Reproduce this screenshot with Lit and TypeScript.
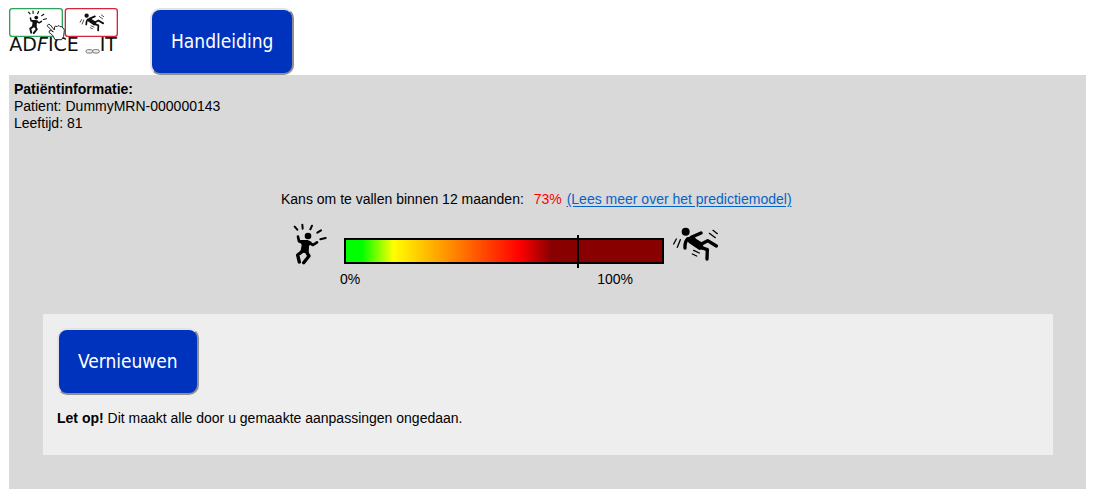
import { LitElement, html, svg, css } from "lit";
import { customElement, property } from "lit/decorators.js";

const dancer = svg`
  <g fill="none" stroke="currentColor" stroke-linecap="round" stroke-linejoin="round">
    <path stroke-width="6" d="M32 32l8 9M55 26l1 12M84 29l-5 11M111 43l-11 7M125 66l-16 4"/>
    <path stroke-width="8" d="M42 62l3 14 14 6M77 81l10 6 12-8"/>
    <path stroke-width="10" d="M54 107l-13 10 5 21M68 109l7 11-16 20"/>
  </g>
  <circle cx="72" cy="60" r="10" fill="currentColor"/>
  <path fill="currentColor" d="M47 72l24 0 12 6-8 13-1 20-12 0-13-2 4-22z"/>`;

const faller = svg`
  <g fill="none" stroke="currentColor" stroke-linecap="round" stroke-linejoin="round">
    <path stroke-width="4" d="M31 57l-8 15M43 59l-9 23M141 31l13 10M130 40l18 13M83 91l17 8M79 102l13 6"/>
    <path stroke-width="10" d="M66 56q-10 8-9 28M76 52l29-13M102 74l23-12 26 16M104 82l20 7-1 28"/>
  </g>
  <circle cx="59" cy="35" r="12" fill="currentColor"/>
  <path fill="currentColor" d="M60 55l22-9 8 10 19 12 5 18-14 4-18-12-14-10z"/>`;

@customElement("adfice-logo")
export class AdficeLogo extends LitElement {
  static styles = css`
    :host { display: block; color: #111; }
    svg { display: block; width: 111px; height: 48px; }
    .name { font-family: "DejaVu Sans", sans-serif; font-size: 57px; fill: #111; }
    .slant { font-style: italic; }
  `;

  render() {
    return html`
      <svg viewBox="27 24 333 144" role="img" aria-label="ADFICE_IT">
        <rect x="29" y="26" width="158" height="83" rx="8" fill="#fff" stroke="#2ba35b" stroke-width="4"/>
        <rect x="196" y="26" width="156" height="83" rx="8" fill="#fff" stroke="#d3263c" stroke-width="4"/>
        <g transform="translate(67 18) scale(.58)">${dancer}</g>
        <g transform="translate(228 28) scale(.54)">${faller}</g>
        <text class="name" x="28" y="154">AD<tspan class="slant">F</tspan>ICE</text>
        <text class="name" x="299" y="154">IT</text>
        <path fill="#fff" stroke="#222" stroke-width="3" stroke-linejoin="round"
          d="M142 76q4-6 9-1l12 15 1-10q4-4 7 0l2-2q5-3 7 2 6-3 8 4 5 0 5 7l-2 18-6 10h-20l-7-13-11-9q-1-7 7-5l6 4-18-18z"/>
        <g fill="#eee" stroke="#777" stroke-width="3">
          <rect x="258" y="149" width="20" height="10" rx="5"/>
          <rect x="278" y="149" width="20" height="10" rx="5"/>
        </g>
      </svg>`;
  }
}

@customElement("fall-risk")
export class FallRisk extends LitElement {
  @property({ type: Number }) risk = 0;

  static styles = css`
    :host { display: block; }
    .summary { margin: 0; }
    .value { color: #f00; margin: 0 1px 0 6px; }
    a { color: #0563c8; text-underline-offset: 2px; }
    .gauge {
      display: grid;
      grid-template-columns: 63px 320px 60px;
      margin-top: 12px;
    }
    .icon { display: block; height: 46px; }
    .dancer { width: 50px; height: 54px; margin-left: 3px; margin-top: -4px; }
    .faller { width: 60px; margin-left: 2px; }
    .scale { margin-top: 18px; }
    .bar {
      position: relative;
      box-sizing: border-box;
      height: 26px;
      border: 2px solid #000;
      background: linear-gradient(to right, #0f0 5%, #ff0 15%, #f00 55%, #880000 65%);
    }
    .marker {
      position: absolute;
      top: -5px;
      bottom: -6px;
      width: 2px;
      background: #000;
    }
    .ends {
      display: flex;
      justify-content: space-between;
      margin: 7px 31px 0 -4px;
    }
  `;

  render() {
    return html`
      <p class="summary">
        Kans om te vallen binnen 12 maanden:
        <span class="value">${this.risk}%</span>
        <a href="#predictiemodel">(Lees meer over het predictiemodel)</a>
      </p>
      <div class="gauge">
        <svg class="icon dancer" viewBox="0 0 150 162" aria-hidden="true">${dancer}</svg>
        <div class="scale">
          <div class="bar"><div class="marker" style="left: ${this.risk}%"></div></div>
          <div class="ends"><span>0%</span><span>100%</span></div>
        </div>
        <svg class="icon faller" viewBox="0 0 180 138" aria-hidden="true">${faller}</svg>
      </div>`;
  }
}

@customElement("app-root")
export class AppRoot extends LitElement {
  static styles = css`
    :host {
      display: block;
      padding: 8px 15px 11px 9px;
      font: 14px/17px "Liberation Sans", Arial, sans-serif;
      color: #000;
    }
    header { display: flex; align-items: flex-start; gap: 30px; }
    button {
      display: block;
      padding: 17px 19px;
      border: 2px outset #e3e3e3;
      border-radius: 10px;
      background: #0033bd;
      color: #fff;
      font: 19px/29px Tahoma, "DejaVu Sans Condensed", sans-serif;
    }
    main { background: #d9d9d9; padding: 6px 33px 34px 5px; }
    .patient { margin: 0; }
    .patient div { display: flex; gap: 4px; }
    .patient dt, .patient dd { margin: 0; }
    h2 { margin: 0; font-size: inherit; line-height: inherit; }
    fall-risk { width: 533px; margin: 59px auto 0; padding-left: 28px; box-sizing: content-box; }
    .renew { margin: 26px 0 0 29px; padding: 14px 14px 28px; background: #eee; }
    .renew p { margin: 15px 0 0; }
  `;

  render() {
    return html`
      <header>
        <adfice-logo></adfice-logo>
        <button type="button">Handleiding</button>
      </header>
      <main>
        <section>
          <h2>Patiëntinformatie:</h2>
          <dl class="patient">
            <div><dt>Patient:</dt><dd>DummyMRN-000000143</dd></div>
            <div><dt>Leeftijd:</dt><dd>81</dd></div>
          </dl>
        </section>
        <fall-risk risk="73"></fall-risk>
        <section class="renew">
          <button type="button">Vernieuwen</button>
          <p><b>Let op!</b> Dit maakt alle door u gemaakte aanpassingen ongedaan.</p>
        </section>
      </main>`;
  }
}
